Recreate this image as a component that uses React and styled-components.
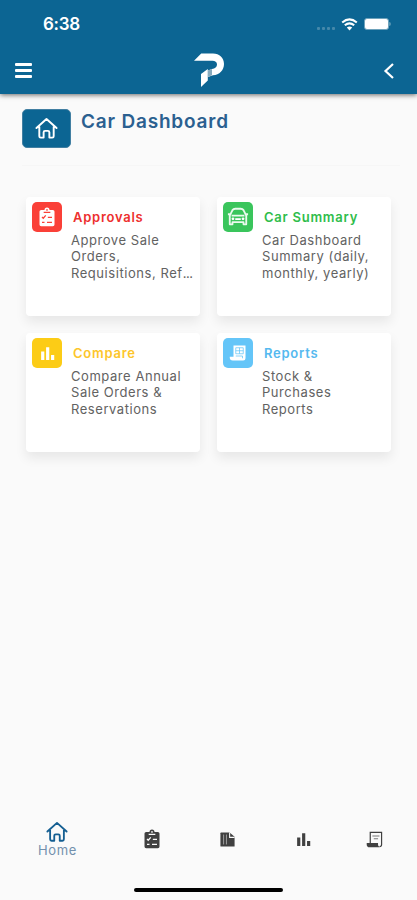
import React from 'react';
import styled, { createGlobalStyle } from 'styled-components';

const cards = [
    { title: 'Approvals', color: '#ed302e', tile: '#fa4038', icon: 'clipboard', size: 20, lines: ['Approve Sale', 'Orders,', 'Requisitions, Ref'], clipped: true },
    { title: 'Car Summary', color: '#2fbd4b', tile: '#3ac55c', icon: 'car', size: 22, lines: ['Car Dashboard', 'Summary (daily,', 'monthly, yearly)'] },
    { title: 'Compare', color: '#fdc62b', tile: '#fccc16', icon: 'bars', size: 17, lines: ['Compare Annual', 'Sale Orders &', 'Reservations'] },
    { title: 'Reports', color: '#55b9ef', tile: '#64c5f8', icon: 'receiptFilled', size: 18, lines: ['Stock &', 'Purchases', 'Reports'] },
];

function Icon({ name, size = 24, cut = '#fafafa' }) {
    return (
        <svg width={size} height={size} viewBox="0 0 24 24" fill="none">
            {name === 'home' && (
                <path d="M1.500 11.500 12 2l10.500 9.500M4.500 10v10q0 1.500 1.500 1.500h3V16q0-1.500 1.500-1.500h3q1.500 0 1.500 1.500v5.500h3q1.500 0 1.500-1.500V10" stroke="currentColor" strokeWidth="2" strokeLinecap="round" strokeLinejoin="round" />
            )}
            {name === 'clipboard' && (
                <>
                    <path d="M5 3.500h4a3 3 0 0 1 6 0h4a2 2 0 0 1 2 2V21a2 2 0 0 1-2 2H5a2 2 0 0 1-2-2V5.500a2 2 0 0 1 2-2z" fill="currentColor" />
                    <path d="M8 6.500h8M6 12l1.500 1.500L10.500 10M13 12.500h5M6 18.500h3M12 18.500h6" stroke={cut} strokeWidth="1.500" />
                    <circle cx="12" cy="3.500" r="1" fill={cut} />
                </>
            )}
            {name === 'car' && (
                <>
                    <path d="M3 10.500 6 4.500Q7 3 9 3h6q2 0 3 1.500l3 6V20h-3v-2.500H6V20H3zM5 10.500h14M1 9h3M20 9h3" stroke="currentColor" strokeWidth="2" strokeLinejoin="round" opacity="0.9" />
                    <path d="M9 14.300h6" stroke="currentColor" strokeWidth="2" />
                    <circle cx="6.500" cy="14" r="1.500" fill="currentColor" />
                    <circle cx="17.500" cy="14" r="1.500" fill="currentColor" />
                </>
            )}
            {name === 'bars' && <path d="M3 9h4.500v12H3zM10 3h4.500v18H10zM17 14h4.500v7H17z" fill="currentColor" />}
            {name === 'file' && (
                <>
                    <path d="M3 2h12l7 6v14H3a1 1 0 0 1-1-1V3a1 1 0 0 1 1-1z" fill="currentColor" />
                    <path d="M15 2v7h7" stroke={cut} strokeWidth="1.500" />
                    <path d="M6.500 5v14M10.500 5v14" stroke={cut} strokeWidth="1" opacity="0.7" />
                </>
            )}
            {name === 'receipt' && (
                <>
                    <path d="M6 17V2h16v17a3 3 0 0 1-3 3" stroke="currentColor" strokeWidth="1.700" />
                    <path d="M1 17h16v3l2 3H5a4 4 0 0 1-4-4z" fill="currentColor" />
                    <path d="M9 7h10M11 11h6" stroke="currentColor" strokeWidth="1.600" opacity="0.7" />
                </>
            )}
            {name === 'receiptFilled' && (
                <>
                    <path d="M6 2h16v17a3 3 0 0 1-3 3H5a4 4 0 0 1-4-4v-1h5z" fill="currentColor" />
                    <path d="M9 5h10v8H9zM9 9h10M14 5v8M9 16h9v3" stroke={cut} strokeWidth="1" />
                </>
            )}
        </svg>
    );
}

function Logo() {
    return (
        <svg width="32" height="36" viewBox="0 0 32 36" fill="none">
            <path d="M1 8.800 8.200 1.500H20c6.500 0 11 4.500 11 10.500S26.500 23 20 23.300l-5 1.700v-6.500l4-1.500c3-.3 5-2 5-4.500s-2-3.700-4.500-3.700z" fill="#fff" />
            <path d="m15 18.500 4-1.500v6.300L15 25z" fill="#87aabd" />
            <path d="m8 22 6.800-5v11.500L8 35z" fill="#fff" />
        </svg>
    );
}

function App() {
    return (
        <>
            <GlobalStyle />
            <Screen>
                <Header>
                    <StatusBar>
                        <Time>6:38</Time>
                        <Indicators>
                            <Signal><i /><i /><i /><i /></Signal>
                            <svg width="17" height="13" viewBox="0 0 17 13" fill="none">
                                <path d="M1.200 4.500Q8.500-1.600 15.800 4.500M3.800 7.300q4.700-3.800 9.400 0" stroke="#fff" strokeWidth="2.100" />
                                <path d="M5.800 9.500q2.700-2 5.400 0L8.500 12.500z" fill="#fff" />
                            </svg>
                            <Battery><span /></Battery>
                        </Indicators>
                    </StatusBar>
                    <Toolbar>
                        <Menu><span /><span /><span /></Menu>
                        <Logo />
                        <Back>
                            <svg width="12" height="18" viewBox="0 0 12 18" fill="none">
                                <path d="m10 2-7.500 7 7.500 7" stroke="#fff" strokeWidth="2.200" />
                            </svg>
                        </Back>
                    </Toolbar>
                </Header>
                <Heading>
                    <HomeTile><Icon name="home" size={23} /></HomeTile>
                    <Title>Car Dashboard</Title>
                </Heading>
                <Grid>
                    {cards.map((card) => (
                        <Card key={card.title}>
                            <Tile $color={card.tile}>
                                <Icon name={card.icon} size={card.size} cut={card.tile} />
                            </Tile>
                            <div>
                                <CardTitle $color={card.color}>{card.title}</CardTitle>
                                <Description>
                                    {card.lines.map((line, i) => (
                                        <span key={line}>
                                            {line}
                                            {card.clipped && i === 2 && <Ellipsis>...</Ellipsis>}
                                        </span>
                                    ))}
                                </Description>
                            </div>
                        </Card>
                    ))}
                </Grid>
                <TabBar>
                    <Tab $active>
                        <Icon name="home" size={22} />
                        <span>Home</span>
                    </Tab>
                    <Tab><Icon name="clipboard" size={20} /></Tab>
                    <Tab><Icon name="file" size={17} /></Tab>
                    <Tab><Icon name="bars" size={17} /></Tab>
                    <Tab><Icon name="receipt" size={17} /></Tab>
                </TabBar>
                <HomeIndicator />
            </Screen>
        </>
    );
}

const GlobalStyle = createGlobalStyle`
    * {
        box-sizing: border-box;
    }
    body {
        margin: 0;
        background: #fafafa;
        font-family: Inter, "Liberation Sans", sans-serif;
    }
    svg {
        display: block;
        flex: none;
    }
`;

const Screen = styled.main`
    width: 417px;
    height: 900px;
    display: flex;
    flex-direction: column;
    overflow: hidden;
    background: #fafafa;
`;

const Header = styled.header`
    height: 94px;
    flex: none;
    background: #0c6593;
    box-shadow: 0 1px 5px rgba(0, 0, 0, 0.6);
`;

const StatusBar = styled.div`
    height: 48px;
    padding: 0 26px 0 43px;
    display: flex;
    align-items: center;
    justify-content: space-between;
`;

const Time = styled.span`
    color: #fff;
    font-size: 17px;
    font-weight: 600;
    letter-spacing: -0.3px;
`;

const Indicators = styled.div`
    display: flex;
    align-items: center;
`;

const Signal = styled.div`
    display: flex;
    gap: 2px;
    margin: 8px 6px 0 0;
    i {
        width: 3px;
        height: 3px;
        border-radius: 1px;
        background: #4588aa;
    }
`;

const Battery = styled.div`
    display: flex;
    align-items: center;
    margin-left: 6px;
    span {
        width: 25px;
        height: 12px;
        border: 1px solid #6ea2bb;
        border-radius: 3px;
        background: #fff;
    }
    &::after {
        content: '';
        width: 2px;
        height: 4px;
        background: #5795b3;
        border-radius: 0 2px 2px 0;
    }
`;

const Toolbar = styled.div`
    height: 46px;
    padding: 4px 22px 0 15px;
    display: grid;
    grid-template-columns: 178px 32px 1fr;
`;

const Menu = styled.div`
    display: flex;
    flex-direction: column;
    gap: 3px;
    padding-top: 11px;
    span {
        width: 17px;
        height: 3px;
        border-radius: 1px;
        background: #fff;
    }
`;

const Back = styled.div`
    display: flex;
    justify-content: flex-end;
    padding-top: 10px;
`;

const Heading = styled.div`
    height: 72px;
    flex: none;
    margin: 0 17px 0 22px;
    padding-top: 15px;
    display: flex;
    gap: 10px;
    border-bottom: 1px solid #f6f6f6;
`;

const HomeTile = styled.div`
    width: 49px;
    height: 39px;
    border-radius: 5px;
    background: #0c6593;
    border: 1px solid #427fa2;
    color: #fff;
    display: flex;
    align-items: center;
    justify-content: center;
`;

const Title = styled.h1`
    margin: 1px 0 0;
    color: #2b6090;
    font-size: 19px;
    line-height: 24px;
    font-weight: 600;
    letter-spacing: 0.8px;
`;

const Grid = styled.section`
    display: grid;
    grid-template-columns: 174px 174px;
    grid-auto-rows: 119px;
    gap: 17px;
    padding: 31px 26px 0;
`;

const Card = styled.article`
    display: flex;
    gap: 9px;
    padding: 5px 0 0 6px;
    border-radius: 4px;
    background: #fff;
    box-shadow: 0 6px 12px rgba(0, 0, 0, 0.08);
`;

const Tile = styled.div`
    width: 30px;
    height: 30px;
    flex: none;
    border-radius: 5px;
    background: ${({ $color }) => $color};
    color: #fff;
    display: flex;
    align-items: center;
    justify-content: center;
`;

const CardTitle = styled.h2`
    margin: 0;
    padding: 7px 0 0 2px;
    color: ${({ $color }) => $color};
    font-size: 13px;
    line-height: 16px;
    font-weight: 600;
    letter-spacing: 0.75px;
`;

const Description = styled.p`
    margin: 7px 0 0;
    color: #626262;
    font-size: 13px;
    line-height: 16.400px;
    letter-spacing: 0.55px;
    white-space: nowrap;
    span {
        display: block;
    }
`;

const Ellipsis = styled.i`
    font-style: normal;
    letter-spacing: -0.4px;
`;

const TabBar = styled.nav`
    height: 64px;
    margin-top: auto;
    display: grid;
    grid-template-columns: 115px 74px 77px 74px 69px;
    align-items: center;
    justify-items: center;
`;

const Tab = styled.div`
    display: flex;
    flex-direction: column;
    align-items: center;
    padding-top: 2px;
    color: ${({ $active }) => ($active ? '#155f92' : '#404040')};
    span {
        color: #7290ad;
        font-size: 13px;
        line-height: 14px;
        letter-spacing: 0.6px;
    }
`;

const HomeIndicator = styled.div`
    width: 149px;
    height: 4px;
    flex: none;
    margin: 18px auto 8px;
    border-radius: 4px;
    background: #000;
`;

export default App;
